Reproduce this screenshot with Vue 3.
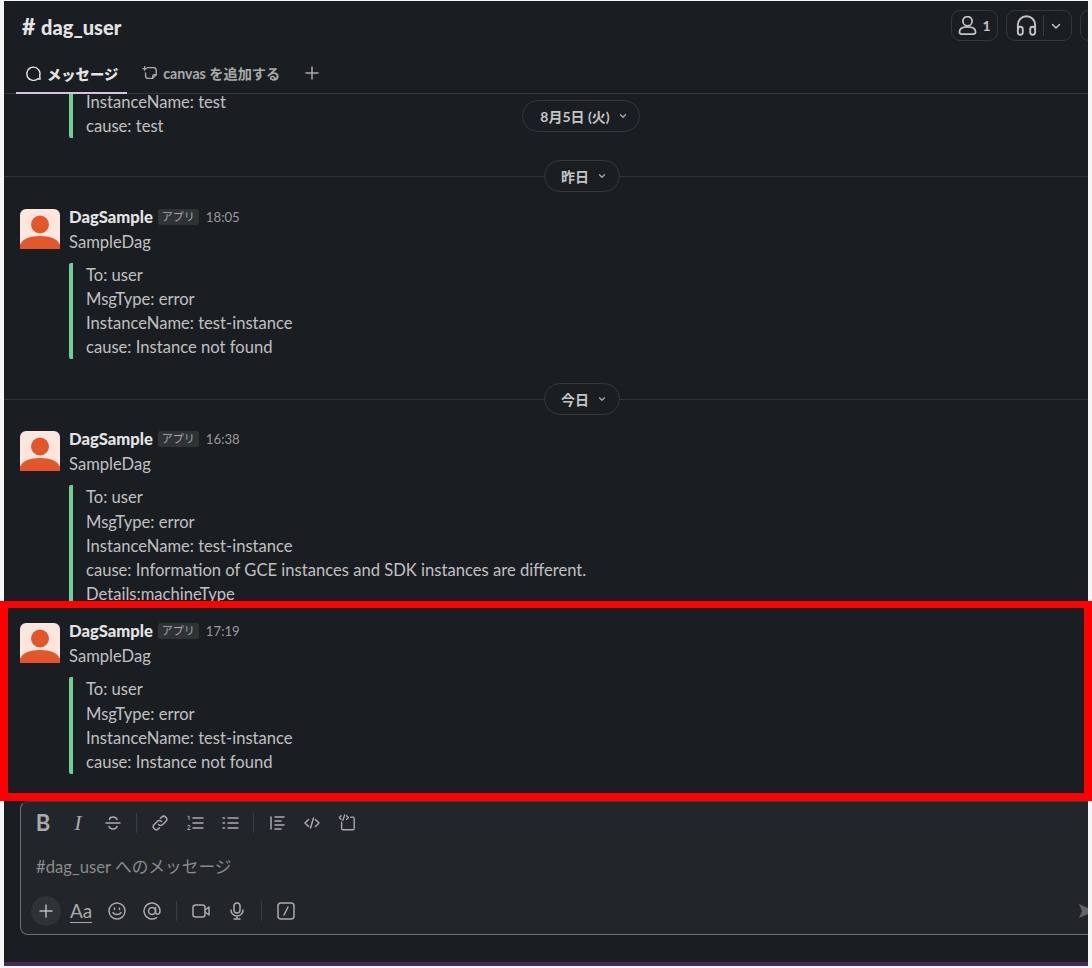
<template>
  <div class="page">
    <div class="window">
      <header class="head">
        <div class="title-row">
          <div class="title"><span class="hash">#</span> dag_user</div>
          <div class="head-btns">
            <div class="head-btn members">
              <svg viewBox="2 2 16 16.500" class="ico19">
                <circle cx="10" cy="6.500" r="4" />
                <path d="M3 16c0-3 3-4.500 7-4.500s7 1.500 7 4.500c0 1-.8 1.700-1.800 1.700H4.800c-1 0-1.800-.7-1.800-1.700z" />
              </svg>
              <span>1</span>
            </div>
            <div class="head-btn huddle">
              <svg viewBox="2 1.500 16 17" class="ico21">
                <path d="M3 13V9.500a7 7 0 0 1 14 0V13" />
                <rect x="3" y="11" width="4" height="6.500" rx="2" />
                <rect x="13" y="11" width="4" height="6.500" rx="2" />
              </svg>
              <i class="sep"></i>
              <svg viewBox="0 0 12 12" class="ico12"><path d="M2.500 4.500 6 8l3.500-3.500" /></svg>
            </div>
            <div class="head-btn stub"></div>
          </div>
        </div>
        <nav class="tabs">
          <div class="tab active">
            <svg viewBox="0 0 18 18" class="ico17">
              <path d="M13.500 14.500A7 7 0 1 1 15.500 11.500L16 15z" />
            </svg>
            メッセージ
          </div>
          <div class="tab">
            <svg viewBox="0 0 18 18" class="ico16 dim">
              <path d="M6 3h7a3 3 0 0 1 3 3v5l-4 4H7a3 3 0 0 1-3-3V9" />
              <path d="M12 15v-2a2 2 0 0 1 2-2h2" />
              <path d="M3 2v4M1 4h4" />
            </svg>
            canvas を追加する
          </div>
          <div class="tab plus">
            <svg viewBox="0 0 16 16" class="ico16 dim"><path d="M8 2v12M2 8h12" /></svg>
          </div>
        </nav>
      </header>

      <main class="messages">
        <div class="sticky-date">8月5日 (火)<svg viewBox="0 0 12 12" class="chev"><path d="M3 4.500 6 7.500l3-3" /></svg></div>

        <div class="old-attach">
          <div class="line first">InstanceName: test</div>
          <div class="line">cause: test</div>
        </div>

        <template v-for="m in items" :key="m.time">
          <div v-if="m.day" class="divider">
            <span class="day">{{ m.day }}<svg viewBox="0 0 12 12" class="chev"><path d="M3 4.500 6 7.500l3-3" /></svg></span>
          </div>
          <article class="msg">
            <div class="avatar">
              <svg viewBox="0 0 40 40">
                <rect width="40" height="40" rx="6" fill="#fbe6e0" />
                <circle cx="20" cy="15.500" r="9" fill="#e2562c" />
                <path d="M0 40V36C2 30 10 27 20 27s18 3 20 9v4z" fill="#e2562c" />
              </svg>
            </div>
            <div class="body">
              <div class="meta">
                <span class="name">DagSample</span>
                <span class="badge">アプリ</span>
                <span class="time">{{ m.time }}</span>
              </div>
              <div class="sub">SampleDag</div>
              <div class="attach">
                <div v-for="l in m.lines" :key="l" class="line">{{ l }}</div>
              </div>
            </div>
          </article>
        </template>
      </main>

      <section class="composer">
        <div class="format">
          <span class="fmt b">B</span>
          <span class="fmt i">I</span>
          <svg viewBox="0 0 18 18" class="ico18"><path d="M2 9h14M13 5.500C12.500 4 11 3 9 3 7 3 5.500 4 5.500 5.500M5 12.500C5.500 14 7 15 9 15s3.500-1 4-2.500" /></svg>
          <i class="vsep"></i>
          <svg viewBox="0 0 18 18" class="ico18"><path d="M7.500 10.500a3 3 0 0 0 4.300 0l3-3a3 3 0 0 0-4.300-4.300l-1 1M10.500 7.500a3 3 0 0 0-4.300 0l-3 3a3 3 0 0 0 4.300 4.300l1-1" /></svg>
          <svg viewBox="0 0 18 18" class="ico18"><path d="M7 4h10M7 9h10M7 14h10" /><path class="thin" d="M2 2.500 3 2v3.500M1.500 12c.3-1 2.500-1 2.500.300S2 14 1.500 15.500H4" /></svg>
          <svg viewBox="0 0 18 18" class="ico18"><path d="M7 4h10M7 9h10M7 14h10M2 4h1.500M2 9h1.500M2 14h1.500" /></svg>
          <i class="vsep"></i>
          <svg viewBox="0 0 18 18" class="ico18"><path d="M3 3v12M7 3h9M7 7h6M7 11h9M7 15h6" /></svg>
          <svg viewBox="0 0 18 18" class="ico18"><path d="M5.500 5.500 2 9l3.500 3.500M12.500 5.500 16 9l-3.500 3.500M10.500 4l-3 10" /></svg>
          <svg viewBox="0 0 20 20" class="ico18"><path d="M4 9v7a1.500 1.500 0 0 0 1.500 1.500h11A1.500 1.500 0 0 0 18 16V5a1.500 1.500 0 0 0-1.500-1.500H14" /><path d="M3.500 2 1.500 4l2 2M9.500 2l2 2-2 2M7.500 1l-2 6" /></svg>
        </div>
        <div class="placeholder">#dag_user へのメッセージ</div>
        <div class="actions">
          <span class="add"><svg viewBox="0 0 16 16" class="ico16"><path d="M8 2v12M2 8h12" /></svg></span>
          <span class="aa">Aa</span>
          <svg viewBox="0 0 20 20" class="ico20"><circle cx="10" cy="10" r="8" /><path d="M6 11.500c1 2.500 7 2.500 8 0" /><path d="M7.500 7v1.500M12.500 7v1.500" /></svg>
          <svg viewBox="0 0 20 20" class="ico20"><circle cx="10" cy="10" r="3.500" /><path d="M13.500 6.500V11c0 3 4.500 3 4.500-1a8 8 0 1 0-3.500 6.600" /></svg>
          <i class="vsep"></i>
          <svg viewBox="0 0 20 20" class="ico20"><rect x="2" y="4" width="12" height="12" rx="2.500" /><path d="M14 9l4-3v8l-4-3" /></svg>
          <svg viewBox="0 0 20 20" class="ico20 mic"><rect x="7" y="2" width="6" height="10" rx="3" /><path d="M4 9a6 6 0 0 0 12 0M10 15v3M7 18h6" /></svg>
          <i class="vsep"></i>
          <svg viewBox="0 0 20 20" class="ico20"><rect x="2" y="2" width="16" height="16" rx="3" /><path d="M8 14l4-8" /></svg>
          <svg viewBox="0 0 20 20" class="send"><path d="M2 3l16 7-16 7 3-7z" /></svg>
        </div>
      </section>
      <div class="foot"></div>
    </div>
    <!-- 赤枠の注釈 -->
    <div class="highlight"></div>
  </div>
</template>

<script setup>
const base = ['To: user', 'MsgType: error', 'InstanceName: test-instance']

const items = [
  { day: '昨日', time: '18:05', lines: [...base, 'cause: Instance not found'] },
  {
    day: '今日',
    time: '16:38',
    lines: [...base, 'cause: Information of GCE instances and SDK instances are different.', 'Details:machineType'],
  },
  { time: '17:19', lines: [...base, 'cause: Instance not found'] },
]
</script>

<style>
html,
body {
  margin: 0;
  background: #fff;
}
</style>

<style scoped>
.page {
  position: relative;
  width: 1092px;
  height: 968px;
  overflow: hidden;
  background: #f6f6f6;
  font-family: Lato, "Noto Sans CJK JP", sans-serif;
  color: #d1d2d3;
}

.window {
  display: flex;
  flex-direction: column;
  width: 1084px;
  height: 965px;
  margin-left: 4px;
  position: relative;
  top: 1px;
  background: #1a1d21;
  overflow: hidden;
}

svg {
  flex: none;
  fill: none;
  stroke: currentColor;
  stroke-width: 1.5;
  stroke-linecap: round;
  stroke-linejoin: round;
}

.ico12 { width: 12px; height: 12px; }
.ico16 { width: 16px; height: 16px; }
.ico17 { width: 17px; height: 17px; }
.ico18 { width: 18px; height: 18px; }
.ico19 { width: 19px; height: 19px; }
.ico20 { width: 20px; height: 20px; }
.ico21 { width: 21px; height: 21px; }
.dim { color: #a9aaab; }

.head {
  flex: none;
  height: 93px;
  box-sizing: border-box;
  border-bottom: 1px solid #34373b;
}

.title-row {
  display: flex;
  align-items: flex-start;
  justify-content: space-between;
  height: 55px;
  padding-left: 18px;
}

.title {
  margin-top: 12px;
  font-size: 20px;
  line-height: 26px;
  font-weight: 900;
  color: #e4e4e5;
}

.hash {
  margin-right: 1px;
  font-size: 23px;
}

.head-btns {
  display: flex;
  gap: 8px;
  margin-top: 9px;
  margin-right: -12px;
}

.head-btn {
  display: flex;
  align-items: center;
  justify-content: center;
  box-sizing: border-box;
  height: 31px;
  border: 1px solid #34373b;
  border-radius: 9px;
  color: #c4c5c6;
  font-size: 14px;
  font-weight: 700;
}

.members { width: 47px; gap: 5px; }
.huddle { width: 66px; gap: 6px; }
.stub { width: 20px; }
.sep { width: 1px; height: 21px; background: #3a3d41; }

.tabs {
  display: flex;
  align-items: flex-start;
  height: 37px;
  padding-left: 12px;
}

.tab {
  display: flex;
  align-items: center;
  gap: 5px;
  height: 34px;
  padding: 0 9px 3px;
  color: #a9aaab;
  font-size: 14.200px;
  font-weight: 700;
}

.tab.active {
  padding: 0 9px 2px;
  margin-right: 6px;
  color: #e4e4e5;
  border-bottom: 2px solid #d8c3dc;
  font-size: 14.300px;
  font-weight: 900;
}

.tab.plus {
  margin-left: 6px;
}

.messages {
  position: relative;
  flex: none;
  height: 707px;
  overflow: hidden;
}

.line {
  height: 24.200px;
  font-size: 16.600px;
  line-height: 24.200px;
  white-space: nowrap;
  color: #c0c1c2;
}

.old-attach {
  box-sizing: border-box;
  margin: 0 0 -1px 65px;
  padding-left: 13px;
  border-left: 4px solid #6fcf97;
  border-radius: 0 0 0 2px;
}

/* 上端にスクロールで切れている行 */
.line.first {
  height: 16px;
  margin-bottom: 4px;
  line-height: 16px;
}

.sticky-date,
.day {
  display: inline-flex;
  align-items: center;
  justify-content: center;
  gap: 8px;
  box-sizing: border-box;
  height: 32px;
  border: 1px solid #34373b;
  border-radius: 16px;
  background: #1a1d21;
  font-size: 14px;
  font-weight: 700;
  color: #c4c5c6;
}

.sticky-date {
  position: absolute;
  top: 6px;
  left: 518px;
  width: 118px;
  padding-left: 6px;
  z-index: 1;
}

.chev {
  width: 10px;
  height: 10px;
  color: #a9aaab;
}

.divider {
  display: flex;
  justify-content: center;
  position: relative;
  height: 32px;
  margin-top: 23px;
  padding-left: 72px;
}

.divider::before {
  content: "";
  position: absolute;
  top: 16px;
  left: 0;
  right: 0;
  height: 1px;
  background: #2f3236;
}

.day {
  position: relative;
  width: 76px;
  padding-left: 4px;
}

.msg {
  display: flex;
  gap: 9px;
  padding: 16.500px 16px 0.500px;
}

.avatar {
  flex: none;
  width: 40px;
  height: 40px;
}

.avatar svg {
  display: block;
  width: 40px;
  height: 40px;
  stroke: none;
}

.meta {
  display: flex;
  align-items: center;
  gap: 5px;
  height: 16px;
}

.name {
  font-size: 16.600px;
  font-weight: 900;
  color: #e4e4e5;
}

.badge {
  padding: 0 4px;
  height: 16px;
  border-radius: 2px;
  background: #2f3236;
  font-size: 11px;
  line-height: 15px;
  color: #a9aaab;
}

.time {
  margin-left: 2px;
  font-size: 13.200px;
  color: #9a9b9c;
}

.sub {
  margin-top: 5px;
  font-size: 16.600px;
  line-height: 24px;
  color: #c0c1c2;
}

.attach {
  margin-top: 9px;
  padding-left: 13px;
  border-left: 4px solid #6fcf97;
  border-radius: 2px;
}

.composer {
  flex: none;
  box-sizing: border-box;
  display: flex;
  flex-direction: column;
  width: 1085px;
  height: 134px;
  margin-left: 16px;
  border: 1px solid #6d6f72;
  border-top-color: #3a3d41;
  border-radius: 8px;
  background: #222529;
  color: #a9aaab;
}

.format {
  display: flex;
  align-items: center;
  gap: 17px;
  height: 22px;
  margin-top: 10px;
  padding-left: 13px;
}

.fmt {
  width: 18px;
  text-align: center;
  font-size: 22px;
  line-height: 22px;
}

.fmt.b { font-weight: 700; }
.fmt.i { font-style: italic; font-weight: 400; font-family: "Liberation Serif", serif; }

.vsep {
  flex: none;
  width: 1px;
  height: 20px;
  margin: 0 -3px;
  background: #3a3d41;
}

.thin { stroke-width: 1; }

.placeholder {
  margin-top: 22px;
  padding-left: 15px;
  font-size: 16.700px;
  line-height: 22px;
  color: #8a8c8e;
}

.actions {
  position: relative;
  display: flex;
  align-items: center;
  gap: 15px;
  margin-top: 17px;
  padding-left: 10px;
  height: 32px;
}

.actions .vsep {
  margin: 0 -1px;
}

.mic {
  margin-left: 1px;
}

.add {
  display: flex;
  align-items: center;
  justify-content: center;
  width: 30px;
  height: 30px;
  margin-right: -6px;
  border-radius: 50%;
  background: #2f3236;
  color: #b9babb;
}

.aa {
  font-size: 19px;
  line-height: 22px;
  border-bottom: 1.500px solid #a9aaab;
}

.send {
  position: absolute;
  left: 1056px;
  top: 6px;
  width: 20px;
  height: 20px;
  fill: #636568;
  stroke: none;
}

.foot {
  flex: 1;
  border-bottom: 4px solid #4a2a55;
}

.highlight {
  position: absolute;
  top: 601px;
  left: 0;
  width: 1092px;
  height: 200px;
  box-sizing: border-box;
  border: 8px solid #f00;
  border-width: 7px 8px 8px;
  pointer-events: none;
}
</style>
